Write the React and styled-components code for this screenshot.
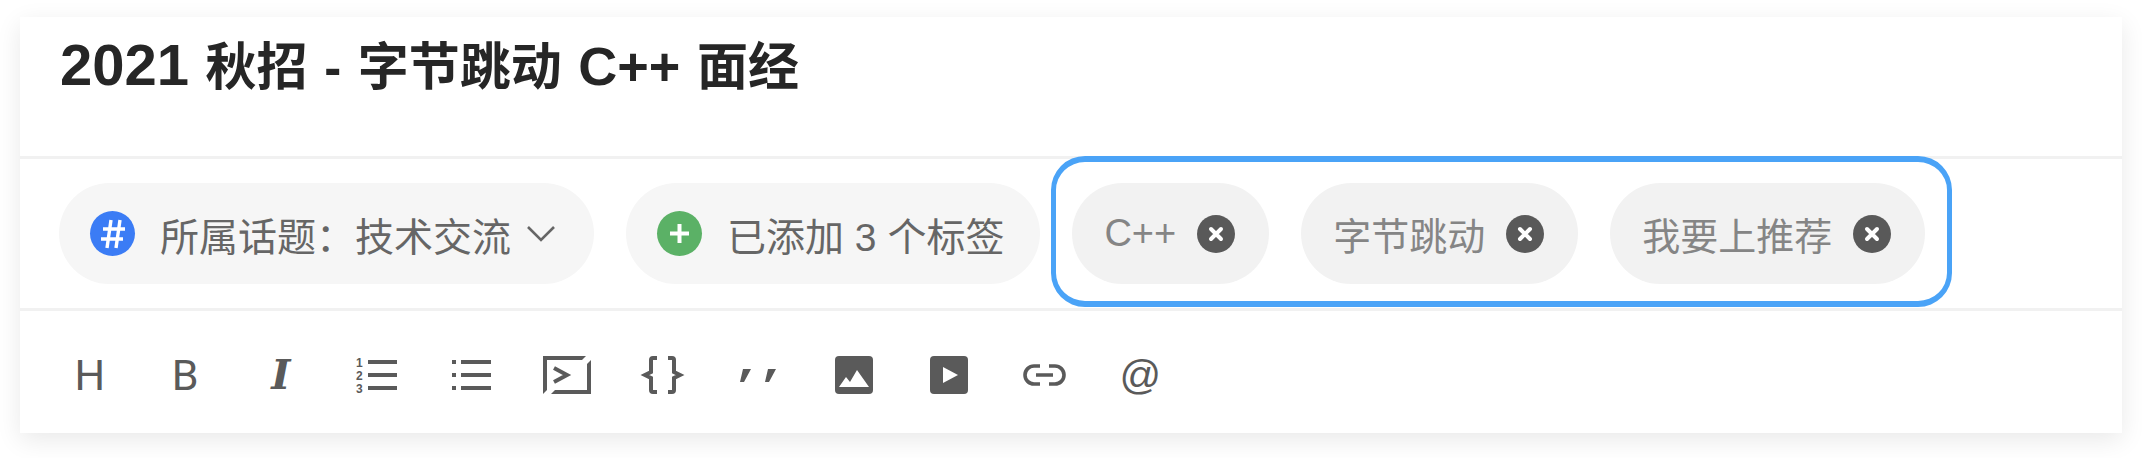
import React from 'react'
import styled, { createGlobalStyle } from 'styled-components'

const FONT = '"Liberation Sans", "Noto Sans CJK SC", sans-serif'
const ICON_COLOR = '#5a5a5a'

const GlobalStyle = createGlobalStyle`
	html, body {
		margin: 0;
		background: #fff;
	}
	* {
		box-sizing: border-box;
	}
`

const Page = styled.div`
	width: 2142px;
	height: 458px;
	padding: 17px 20px 25px;
	overflow: hidden;
	font-family: ${FONT};
`

const Card = styled.div`
	height: 416px;
	background: #fff;
	box-shadow: 0 7px 24px rgba(0, 0, 0, 0.09);
	display: flex;
	flex-direction: column;
`

const TitleBar = styled.div`
	height: 142px;
	padding: 15px 0 0 40px;
	border-bottom: 3px solid #f1f1f1;
`

const Title = styled.h1`
	margin: 0;
	font-size: 51px;
	line-height: 66px;
	font-weight: 700;
	color: #262626;
	word-spacing: 2.4px;
`

const Latin = styled.span`
	font-size: ${(p) => p.$size}px;
`

const TopicRow = styled.div`
	height: 152px;
	padding-left: 39px;
	border-bottom: 3px solid #f1f1f1;
	display: flex;
	align-items: flex-start;
`

const Pill = styled.div`
	height: 101px;
	margin-top: 24px;
	margin-right: ${(p) => p.$gap || 0}px;
	padding: 0 ${(p) => p.$right}px 0 31px;
	border-radius: 51px;
	background: #f6f6f6;
	color: #666;
	font-size: 39px;
	display: flex;
	align-items: center;
	white-space: nowrap;
`

const Dot = styled.span`
	width: 45px;
	height: 45px;
	border-radius: 50%;
	background: ${(p) => p.$color};
	margin-right: 25px;
	display: flex;
	align-items: center;
	justify-content: center;
	flex: none;
`

const Chevron = styled.svg`
	width: 30px;
	height: 17px;
	margin-left: 15px;
	flex: none;
`

const Highlight = styled.div`
	height: 151px;
	margin: -3px 0 0 11px;
	padding: 21px 22px 0 16px;
	border: 5px solid #4aa3f7;
	border-top-width: 6px;
	border-bottom-width: 6px;
	border-radius: 34px;
	display: flex;
	gap: 32px;
	position: relative;
	background: #fff;
`

const Tag = styled.div`
	height: 101px;
	padding: 0 34px 0 32px;
	border-radius: 51px;
	background: #f2f2f2;
	color: #858585;
	font-size: 38px;
	display: flex;
	align-items: center;
	gap: 21px;
	white-space: nowrap;
`

const Close = styled.svg`
	width: 38px;
	height: 38px;
	flex: none;
`

const Toolbar = styled.div`
	height: 122px;
	padding: 6px 0 0 22px;
	display: flex;
	align-items: center;
`

const Tool = styled.span`
	width: 95.5px;
	height: 48px;
	display: flex;
	align-items: center;
	justify-content: center;
	color: ${ICON_COLOR};
	font-size: ${(p) => p.$size || 40}px;
	font-family: ${(p) => p.$family || FONT};
	font-weight: ${(p) => p.$weight || 400};
	font-style: ${(p) => p.$italic ? 'italic' : 'normal'};
	line-height: 1;
`

const ToolIcon = styled.svg`
	width: ${(p) => p.$w}px;
	height: ${(p) => p.$h}px;
	overflow: visible;
`

function CloseIcon() {
	return (
		<Close viewBox="0 0 38 38">
			<circle cx="19" cy="19" r="19" fill="#595959" />
			<path d="M14 14l10 10M24 14L14 24" stroke="#fff" strokeWidth="4" strokeLinecap="round" />
		</Close>
	)
}

export default function App() {
	return (
		<Page>
			<GlobalStyle />
			<Card>
				<TitleBar>
					<Title>
						<Latin $size={58}>2021</Latin> 秋招 - 字节跳动 <Latin $size={54}>C++</Latin> 面经
					</Title>
				</TitleBar>
				<TopicRow>
					<Pill $right={38} $gap={32}>
						<Dot $color="#3b7cf5">
							<svg width="24" height="30" viewBox="0 0 24 30">
								<path d="M10 1L6 29M19 1L15 29M2 10h22M0 20h22" stroke="#fff" strokeWidth="3.4" fill="none" />
							</svg>
						</Dot>
						所属话题：技术交流
						<Chevron viewBox="0 0 30 17">
							<path d="M2 2l13 13L28 2" stroke="#666" strokeWidth="2.6" fill="none" />
						</Chevron>
					</Pill>
					<Pill $right={36}>
						<Dot $color="#5bb166">
							<svg width="21" height="21" viewBox="0 0 21 21">
								<path d="M10.5 1v19M1 10.5h19" stroke="#fff" strokeWidth="4" fill="none" />
							</svg>
						</Dot>
						已添加 3 个标签
					</Pill>
					<Highlight>
						<Tag>C++<CloseIcon /></Tag>
						<Tag>字节跳动<CloseIcon /></Tag>
						<Tag>我要上推荐<CloseIcon /></Tag>
					</Highlight>
				</TopicRow>
				<Toolbar>
					<Tool $size={43} $family="Roboto, sans-serif">H</Tool>
					<Tool $size={43} $family="Roboto, sans-serif">B</Tool>
					<Tool $size={41} $family='"DejaVu Serif", serif' $italic $weight={700}>I</Tool>
					<Tool>
						<ToolIcon $w={41} $h={36} viewBox="0 0 41 36">
							<path d="M12 5h29M12 18h29M12 31h29" stroke={ICON_COLOR} strokeWidth="4" />
							<text x="0" y="10" fontSize="12" fontWeight="700" fontFamily={FONT} fill={ICON_COLOR}>1</text>
							<text x="0" y="23" fontSize="12" fontWeight="700" fontFamily={FONT} fill={ICON_COLOR}>2</text>
							<text x="0" y="36" fontSize="12" fontWeight="700" fontFamily={FONT} fill={ICON_COLOR}>3</text>
						</ToolIcon>
					</Tool>
					<Tool>
						<ToolIcon $w={39} $h={36} viewBox="0 0 39 36">
							<path d="M9 5h30M9 18h30M9 31h30" stroke={ICON_COLOR} strokeWidth="4" />
							<path d="M0 3h4v4H0zM0 16h4v4H0zM0 29h4v4H0z" fill={ICON_COLOR} />
						</ToolIcon>
					</Tool>
					<Tool>
						<ToolIcon $w={48} $h={38} viewBox="0 0 48 38">
							<path d="M0 0h43l-4 4H4v30l-4 4zM48 4v34H8l4-4h32V8z" fill={ICON_COLOR} />
							<path d="M11 12l13 7-13 7" stroke={ICON_COLOR} strokeWidth="4" fill="none" />
						</ToolIcon>
					</Tool>
					<Tool>
						<ToolIcon $w={39} $h={38} viewBox="0 0 39 38">
							<path d="M14 2h-4a2 2 0 0 0-2 2v12l-6 3 6 3v12a2 2 0 0 0 2 2h4M25 2h4a2 2 0 0 1 2 2v12l6 3-6 3v12a2 2 0 0 1-2 2h-4" stroke={ICON_COLOR} strokeWidth="4" fill="none" />
						</ToolIcon>
					</Tool>
					<Tool>
						<ToolIcon $w={36} $h={13} viewBox="0 0 36 13">
							<path d="M3 0h8L4 13H0zM28 0h8l-7 13h-4z" fill={ICON_COLOR} />
						</ToolIcon>
					</Tool>
					<Tool>
						<ToolIcon $w={38} $h={38} viewBox="0 0 38 38">
							<rect width="38" height="38" rx="4" fill={ICON_COLOR} />
							<path d="M4 31l7-10 4 5 7-12 12 17z" fill="#fff" />
						</ToolIcon>
					</Tool>
					<Tool>
						<ToolIcon $w={38} $h={38} viewBox="0 0 38 38">
							<rect width="38" height="38" rx="4" fill={ICON_COLOR} />
							<path d="M13 11l15 8-15 8z" fill="#fff" />
						</ToolIcon>
					</Tool>
					<Tool>
						<ToolIcon $w={43} $h={22} viewBox="0 0 43 22">
							<path d="M17 2h-6a9 9 0 0 0 0 18h6M26 2h6a9 9 0 0 1 0 18h-6M13 11h17" stroke={ICON_COLOR} strokeWidth="3.6" fill="none" />
						</ToolIcon>
					</Tool>
					<Tool $size={41}>@</Tool>
				</Toolbar>
			</Card>
		</Page>
	)
}
